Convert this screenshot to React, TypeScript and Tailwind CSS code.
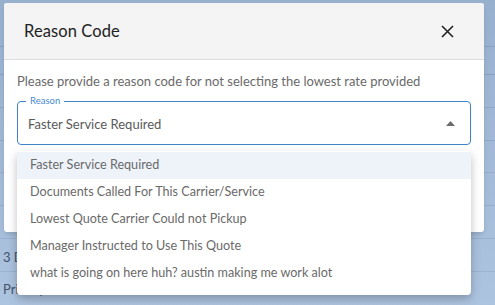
import React from "react";

const reasons = [
  "Faster Service Required",
  "Documents Called For This Carrier/Service",
  "Lowest Quote Carrier Could not Pickup",
  "Manager Instructed to Use This Quote",
  "what is going on here huh? austin making me work alot",
];

const font = { fontFamily: "Lato, 'Open Sans', sans-serif" };

export default function App() {
  return (
    <div
      className="relative w-[495px] h-[305px] overflow-hidden bg-gradient-to-b from-[#97b0ce] to-[#adc4e0]"
      style={font}
    >
      {/* page behind the overlay */}
      <div className="flex flex-col">
        <div className="h-[47px] border-b border-[#87a1c2]" />
        <div className="h-[28px] border-b border-[#87a1c2]" />
        <div className="h-[33px] border-b border-[#8ea8c8]" />
        <div className="h-[33px] border-b border-[#8ea8c8]" />
        <div className="h-[32px] border-b border-[#94aecd]" />
        <div className="h-[33px] border-b border-[#94aecd]" />
        <div className="h-[33px] border-b border-[#99b2d1]" />
        <div className="h-[33px] border-b border-[#9bb4d3] flex items-center pl-[3px] pt-[6px] text-[13px] text-[#41536b]">
          3 Day
        </div>
        <div className="h-[33px] flex items-center pl-[3px] pt-[2px] text-[13px] text-[#41536b]">
          Priority
        </div>
      </div>

      {/* modal */}
      <div className="absolute left-[4px] top-[3px] w-[480px] h-[229px] bg-white rounded-[3px] shadow-md overflow-hidden">
        <div className="h-[57px] bg-[#f4f4f4] border-b border-[#dcdcdc] flex items-center justify-between pl-[20px] pr-[30px]">
          <span className="text-[16.5px] text-[#222] tracking-[0.1px]">Reason Code</span>
          <svg width="13" height="13" viewBox="0 0 13 13" className="text-[#222]">
            <path d="M1 1L12 12M12 1L1 12" stroke="currentColor" strokeWidth="1.6" />
          </svg>
        </div>
        <div className="px-[13px] pt-[13px]">
          <p className="text-[13px] text-[#6a6a6a] leading-[16px]">
            Please provide a reason code for not selecting the lowest rate provided
          </p>
          <div className="relative mt-[12px] h-[44px] border border-[#3f83c9] rounded-[4px] flex items-center justify-between pl-[10px] pr-[15px]">
            <span className="absolute left-[8px] -top-[7px] bg-white px-[4px] text-[9.5px] leading-[12px] text-[#4a8ad0]">
              Reason
            </span>
            <span className="text-[13px] text-[#5a5a5a] pt-[3px]">Faster Service Required</span>
            <svg width="9" height="5" viewBox="0 0 9 5">
              <path d="M0 5L4.5 0L9 5Z" fill="#6b6b6b" />
            </svg>
          </div>
        </div>
      </div>

      {/* open select menu */}
      <div className="absolute left-[17px] top-[151px] w-[454px] h-[144px] bg-white rounded-[4px] shadow-[0_4px_10px_rgba(0,0,0,0.25)] pt-[1px]">
        {reasons.map((r, i) => (
          <div
            key={r}
            className={`h-[27px] flex items-center pl-[13px] text-[12.6px] text-[#6a6a6a] ${
              i === 0 ? "bg-[#eef3fa]" : ""
            }`}
          >
            {r}
          </div>
        ))}
      </div>
    </div>
  );
}
